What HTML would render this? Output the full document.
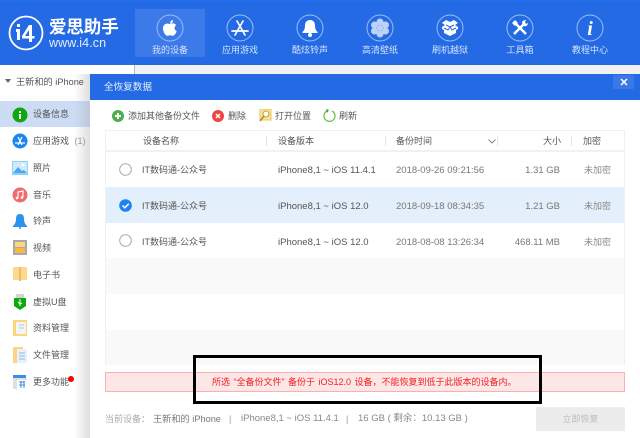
<!DOCTYPE html>
<html><head><meta charset="utf-8">
<style>
html,body{margin:0;padding:0}
body{width:640px;height:438px;overflow:hidden;position:relative;background:#fff;font-family:"Liberation Sans","Noto Sans CJK SC",sans-serif;font-size:9px;color:#555}
div,span,svg{position:absolute}
.t{white-space:nowrap;line-height:16px}
.nav{color:#d5e3fa;font-size:9px;width:70px;text-align:center;top:42px;line-height:16px}
.side{font-size:9px;left:33px;color:#555;white-space:nowrap;line-height:16px}
.hd{top:133px;font-size:9px;color:#555;white-space:nowrap;line-height:16px}
.sep{top:136px;width:1px;height:10px;background:#e4e4e4}
.c{font-size:9px;color:#555;white-space:nowrap;line-height:16px}
.l{font-size:9.500px;margin-top:1px}
</style></head><body>
<div style="left:0;top:0;width:640px;height:65px;background:#236ae4"></div>
<div style="left:0;top:0;width:640px;height:1px;background:#1f72ee"></div>
<div style="left:135px;top:9px;width:70px;height:48px;background:#3b7ae8"></div>
<div style="left:0;top:65px;width:640px;height:9px;background:#f1f1f1"></div>
<div style="left:0;top:65px;width:134px;height:9px;background:#fff"></div>
<div style="left:134px;top:65px;width:1px;height:9px;background:#bbb"></div>

<!-- logo -->
<svg style="left:8px;top:15px" width="36" height="36" viewBox="0 0 36 36"><circle cx="18" cy="18" r="16.500" fill="none" stroke="#fff" stroke-width="1.800"/><path d="M8 14h4v11H9v-8H8zM9 9h3v3H9zM21 10h3v11h2.500v2.500H24V27h-3v-3.500h-7V21zM21 15l-4 6h4z" fill="#fff"/></svg>
<div class="t" style="left:49px;top:17px;font-size:17.500px;color:#fff;line-height:20px;font-weight:bold;letter-spacing:-.1px">爱思助手</div>
<div class="t" style="left:49px;top:36px;font-size:12.500px;color:#e4edfc;line-height:14px;letter-spacing:.1px">www.i4.cn</div>

<!-- nav icons -->
<svg style="left:156px;top:14px" width="28" height="28" viewBox="0 0 28 28"><circle cx="14" cy="14" r="13" fill="none" stroke="#9dbdf3" stroke-width="1"/><path d="M14 10c1.500-.7 3-1 4.500-.3.800.3 1.300.8 1.700 1.400-2.400 1.500-2 5 .5 6-.7 2.200-2.500 4.700-4 4.700-1 0-1.500-.6-2.600-.6s-1.700.6-2.700.6c-2 0-4.400-4-4.400-7.400 0-3 2-4.800 4.200-4.900 1 0 2 .5 2.800.5z" fill="#fff"/><path d="M14 9.500c0-2 1.300-3.300 3-3.500 .1 2-1.200 3.400-3 3.500z" fill="#fff"/></svg>
<svg style="left:226px;top:14px" width="28" height="28" viewBox="0 0 28 28"><circle cx="14" cy="14" r="13" fill="none" stroke="#9dbdf3" stroke-width="1"/><path d="M11 7l8 14M17 7L9 21M6 17h16" stroke="#fff" stroke-width="1.700" fill="none" stroke-linecap="round"/></svg>
<svg style="left:296px;top:14px" width="28" height="28" viewBox="0 0 28 28"><circle cx="14" cy="14" r="13" fill="none" stroke="#9dbdf3" stroke-width="1"/><path d="M14 6c3.500 0 5 2.500 5 5.500 0 3.500 1 5 2.500 6.500v1h-15v-1c1.500-1.500 2.500-3 2.500-6.500C9 8.500 10.500 6 14 6z" fill="#fff"/><circle cx="14" cy="21" r="2" fill="#fff"/></svg>
<svg style="left:366px;top:14px" width="28" height="28" viewBox="0 0 28 28"><circle cx="14" cy="14" r="13" fill="none" stroke="#9dbdf3" stroke-width="1"/><g fill="#fff" opacity=".7"><circle cx="14" cy="8" r="3.500"/><circle cx="14" cy="20" r="3.500"/><circle cx="8.500" cy="11" r="3.500"/><circle cx="19.500" cy="11" r="3.500"/><circle cx="8.500" cy="17" r="3.500"/><circle cx="19.500" cy="17" r="3.500"/><circle cx="14" cy="14" r="3"/></g></svg>
<svg style="left:436px;top:14px" width="28" height="28" viewBox="0 0 28 28"><circle cx="14" cy="14" r="13" fill="none" stroke="#9dbdf3" stroke-width="1"/><path d="M6 9l4-3 4 2 4-2 4 3-3 2 3 2v2l-2 1v3l-6 3-6-3v-3l-2-1v-2l3-2z" fill="#fff"/><path d="M10 11l4 2 4-2M14 13l-2 3-4-2M14 13l2 3 4-2" stroke="#236ae4" stroke-width="1" fill="none"/></svg>
<svg style="left:506px;top:14px" width="28" height="28" viewBox="0 0 28 28"><circle cx="14" cy="14" r="13" fill="none" stroke="#9dbdf3" stroke-width="1"/><path d="M8 20L19 9" stroke="#fff" stroke-width="2.500"/><path d="M20 20L10 10" stroke="#fff" stroke-width="2.500"/><path d="M6 9l3-3 3 3-3 3zM16 9c0-2 2-3 4-3l-1 2 1 2 2-1c0 2-2 4-4 3z" fill="#fff"/></svg>
<svg style="left:576px;top:14px" width="28" height="28" viewBox="0 0 28 28"><circle cx="14" cy="14" r="13" fill="none" stroke="#9dbdf3" stroke-width="1"/><text x="14" y="21" text-anchor="middle" font-family="Liberation Serif" font-style="italic" font-weight="bold" font-size="20" fill="#fff">i</text></svg>

<div class="nav" style="left:135px">我的设备</div>
<div class="nav" style="left:205px">应用游戏</div>
<div class="nav" style="left:275px">酷炫铃声</div>
<div class="nav" style="left:345px">高清壁纸</div>
<div class="nav" style="left:415px">刷机越狱</div>
<div class="nav" style="left:485px">工具箱</div>
<div class="nav" style="left:555px">教程中心</div>

<!-- sidebar -->
<div style="left:0;top:74px;width:90px;height:364px;background:linear-gradient(90deg,#fff 0,#fff 74px,#dedede 90px)"></div>
<div style="left:0;top:101px;width:90px;height:26px;background:linear-gradient(90deg,#cddcf5 0,#cddcf5 74px,#bdc8da 90px)"></div>
<div style="left:5px;top:79px;width:0;height:0;border-left:3px solid transparent;border-right:3px solid transparent;border-top:4px solid #666"></div>
<div class="t" style="left:16px;top:74px;font-size:9.200px;color:#555">王新和的 iPhone</div>

<svg style="left:12px;top:107px" width="16" height="16"><circle cx="8" cy="8" r="7.500" fill="#0da80d"/><rect x="7" y="7" width="2" height="5" fill="#fff"/><rect x="7" y="4" width="2" height="2" fill="#fff"/></svg>
<svg style="left:12px;top:133px" width="16" height="16"><circle cx="8" cy="8" r="7.500" fill="#1a86ee"/><path d="M6 4l4 8M10 4l-4 8M3 10h10" stroke="#fff" stroke-width="1.200"/></svg>
<svg style="left:12px;top:161px" width="16" height="14"><rect width="16" height="14" fill="#8fd0fa"/><rect x="1" y="1" width="14" height="11" fill="#cfeafd"/><circle cx="11" cy="4" r="1.500" fill="#fff"/><path d="M1 12l5-6 4 4 2-1 3 3z" fill="#4da8f0"/></svg>
<svg style="left:12px;top:187px" width="16" height="16"><circle cx="8" cy="8" r="7.500" fill="#f26a6a"/><path d="M6 11V5l5-1v6" stroke="#fff" stroke-width="1.200" fill="none"/><circle cx="5" cy="11" r="1.300" fill="#fff"/><circle cx="10" cy="10.500" r="1.300" fill="#fff"/></svg>
<svg style="left:12px;top:213px" width="16" height="16"><path d="M8 1c3 0 4 2 4 5 0 3 1 5 3 7v1H1v-1c2-2 3-4 3-7 0-3 1-5 4-5z" fill="#2a93ee"/><circle cx="8" cy="15" r="1" fill="#2a93ee"/></svg>
<svg style="left:13px;top:240px" width="14" height="15"><rect width="14" height="15" fill="#a8a8a8"/><rect x="2" y="2" width="10" height="5" fill="#fbd77e"/><rect x="2" y="8" width="10" height="5" fill="#f7b93f"/></svg>
<svg style="left:13px;top:267px" width="14" height="14"><rect width="14" height="13" fill="#fdd98e"/><rect x="6" y="0" width="2" height="14" fill="#f4b86a"/></svg>
<svg style="left:14px;top:294px" width="12" height="16"><rect x="2" y="0" width="8" height="4" fill="#cfd8d0"/><path d="M0 4h12v8l-6 4-6-4z" fill="#0da80d"/><path d="M6 5v7M4 8l2 2 2-1" stroke="#fff" stroke-width="1" fill="none"/></svg>
<svg style="left:13px;top:320px" width="14" height="16"><rect width="14" height="16" fill="#fad77e"/><rect x="3" y="2" width="10" height="12" fill="#f3f4f6"/><path d="M6 5h5M6 8h5" stroke="#b9c4d6"/></svg>
<svg style="left:13px;top:347px" width="14" height="16"><rect width="10" height="16" fill="#fad77e"/><rect x="4" y="2" width="10" height="14" fill="#e8f0fa"/><path d="M6 6h6M6 9h6M6 12h6" stroke="#8fb8e8"/></svg>
<svg style="left:13px;top:375px" width="14" height="14"><rect width="13" height="3" fill="#3a90e8"/><rect y="3" width="14" height="11" fill="#dfdfdf"/><rect x="4" y="5" width="10" height="9" fill="#fff"/><path d="M6 7h6M6 10h6M8 6v7M11 6v7" stroke="#3a90e8"/></svg>

<div class="side" style="top:106px">设备信息</div>
<div class="side" style="top:133px">应用游戏 <span style="position:static;color:#999;margin-left:3px">(1)</span></div>
<div class="side" style="top:160px">照片</div>
<div class="side" style="top:187px">音乐</div>
<div class="side" style="top:213px">铃声</div>
<div class="side" style="top:240px">视频</div>
<div class="side" style="top:267px">电子书</div>
<div class="side" style="top:294px">虚拟U盘</div>
<div class="side" style="top:320px">资料管理</div>
<div class="side" style="top:347px">文件管理</div>
<div class="side" style="top:374px">更多功能</div>
<div style="left:68px;top:376px;width:6px;height:6px;border-radius:50%;background:#f00"></div>

<!-- modal -->
<div style="left:90px;top:74px;width:550px;height:364px;background:#fff"></div>
<div style="left:90px;top:74px;width:550px;height:26px;background:#236ae4"></div>
<div class="t" style="left:104px;top:80px;color:#e6eefc;font-size:9.600px">全恢复数据</div>
<div style="left:613px;top:75px;width:21px;height:14px;background:#3a78e6"></div>
<svg style="left:620px;top:78px" width="8" height="8"><path d="M1 1l6 6M7 1L1 7" stroke="#fff" stroke-width="1.500"/></svg>

<!-- toolbar -->
<svg style="left:112px;top:110px" width="12" height="12"><circle cx="6" cy="6" r="6" fill="#4cae4c"/><path d="M6 3v6M3 6h6" stroke="#fff" stroke-width="2"/></svg>
<div class="t" style="left:128px;top:108px">添加其他备份文件</div>
<svg style="left:212px;top:110px" width="12" height="12"><circle cx="6" cy="6" r="6" fill="#ee4444"/><path d="M4 4l4 4M8 4l-4 4" stroke="#fff" stroke-width="1.500"/></svg>
<div class="t" style="left:228px;top:108px">删除</div>
<svg style="left:259px;top:109px" width="13" height="13"><rect x="1" y="0" width="11" height="11" fill="#fbe58f" stroke="#e6c660" stroke-width="1"/><circle cx="7" cy="5" r="3" fill="#fff" stroke="#c99a3a"/><path d="M5 7l-4 5" stroke="#b08a3a" stroke-width="1.500"/></svg>
<div class="t" style="left:275px;top:108px">打开位置</div>
<svg style="left:323px;top:109px" width="13" height="13"><path d="M4 2a5.500 5.500 0 1 0 5 0" fill="none" stroke="#6cc04a" stroke-width="1.300"/><path d="M3 0l3 1-2 3z" fill="#3d9c3d"/></svg>
<div class="t" style="left:339px;top:108px">刷新</div>

<!-- table -->
<div style="left:105px;top:130px;width:520px;height:235px;box-sizing:border-box;border:1px solid #f1f1f1;border-bottom:none"></div>
<div style="left:106px;top:150px;width:518px;height:2px;background:#f1f1f1"></div>
<div class="hd" style="left:143px">设备名称</div>
<div class="sep" style="left:266px"></div>
<div class="hd" style="left:278px">设备版本</div>
<div class="sep" style="left:385px"></div>
<div class="hd" style="left:396px">备份时间</div>
<svg style="left:488px;top:139px" width="8" height="5"><path d="M.5.500L4 4 7.500.500" stroke="#888" fill="none"/></svg>
<div class="sep" style="left:497px"></div>
<div class="hd" style="left:543px">大小</div>
<div class="sep" style="left:571px"></div>
<div class="hd" style="left:583px">加密</div>

<div style="left:106px;top:187px;width:518px;height:36px;background:#e3effb"></div>
<div style="left:106px;top:258px;width:518px;height:36px;background:#f9f9f9"></div>
<div style="left:106px;top:330px;width:518px;height:35px;background:#f9f9f9"></div>

<svg style="left:119px;top:163px" width="13" height="13"><circle cx="6.500" cy="6.500" r="5.800" fill="#fff" stroke="#a9a9a9" stroke-width="1"/></svg>
<svg style="left:119px;top:199px" width="13" height="13"><circle cx="6.500" cy="6.500" r="6.300" fill="#1e82f0"/><path d="M3.500 6.500l2.300 2.300 4-4" stroke="#fff" stroke-width="1.500" fill="none"/></svg>
<svg style="left:119px;top:234px" width="13" height="13"><circle cx="6.500" cy="6.500" r="5.800" fill="#fff" stroke="#a9a9a9" stroke-width="1"/></svg>

<div class="c" style="left:142px;top:162px">IT数码通-公众号</div>
<div class="c l" style="left:278px;top:162px">iPhone8,1 ~ iOS 11.4.1</div>
<div class="c l" style="left:396px;top:162px;color:#777">2018-09-26 09:21:56</div>
<div class="c l" style="left:500px;width:60px;text-align:right;top:162px;color:#777">1.31 GB</div>
<div class="c" style="left:584px;top:162px;color:#888">未加密</div>

<div class="c" style="left:142px;top:198px">IT数码通-公众号</div>
<div class="c l" style="left:278px;top:198px">iPhone8,1 ~ iOS 12.0</div>
<div class="c l" style="left:396px;top:198px;color:#777">2018-09-18 08:34:35</div>
<div class="c l" style="left:500px;width:60px;text-align:right;top:198px;color:#777">1.21 GB</div>
<div class="c" style="left:584px;top:198px;color:#888">未加密</div>

<div class="c" style="left:142px;top:234px">IT数码通-公众号</div>
<div class="c l" style="left:278px;top:234px">iPhone8,1 ~ iOS 12.0</div>
<div class="c l" style="left:396px;top:234px;color:#777">2018-08-08 13:26:34</div>
<div class="c l" style="left:500px;width:60px;text-align:right;top:234px;color:#777">468.11 MB</div>
<div class="c" style="left:584px;top:234px;color:#888">未加密</div>

<!-- alert -->
<div style="left:105px;top:372px;width:520px;height:20px;box-sizing:border-box;background:#fde6e6;border:1px solid #fbb0b0"></div>
<div class="t" style="left:212px;top:374px;color:#f02020;font-size:9px;word-spacing:1px">所选 “全备份文件” 备份于 iOS12.0 设备，不能恢复到低于此版本的设备内。</div>

<!-- black box -->
<div style="left:193px;top:355px;width:349px;height:49px;box-sizing:border-box;border:3px solid #000"></div>

<!-- footer -->
<div class="t" style="left:105px;top:411px;color:#aaa">当前设备：</div>
<div class="t" style="left:153px;top:411px;color:#777;font-size:9.200px">王新和的 iPhone</div>
<div class="t" style="left:229px;top:411px;color:#999">|</div>
<div class="t" style="left:241px;top:411px;color:#888;font-size:9.500px">iPhone8,1 ~ iOS 11.4.1</div>
<div class="t" style="left:346px;top:411px;color:#999">|</div>
<div class="t" style="left:358px;top:411px;color:#888;font-size:9.500px">16 GB ( 剩余：10.13 GB )</div>
<div style="left:536px;top:407px;width:89px;height:24px;background:#ececec;color:#bbb;text-align:center;line-height:24px;font-size:9px">立即恢复</div>
</body></html>
